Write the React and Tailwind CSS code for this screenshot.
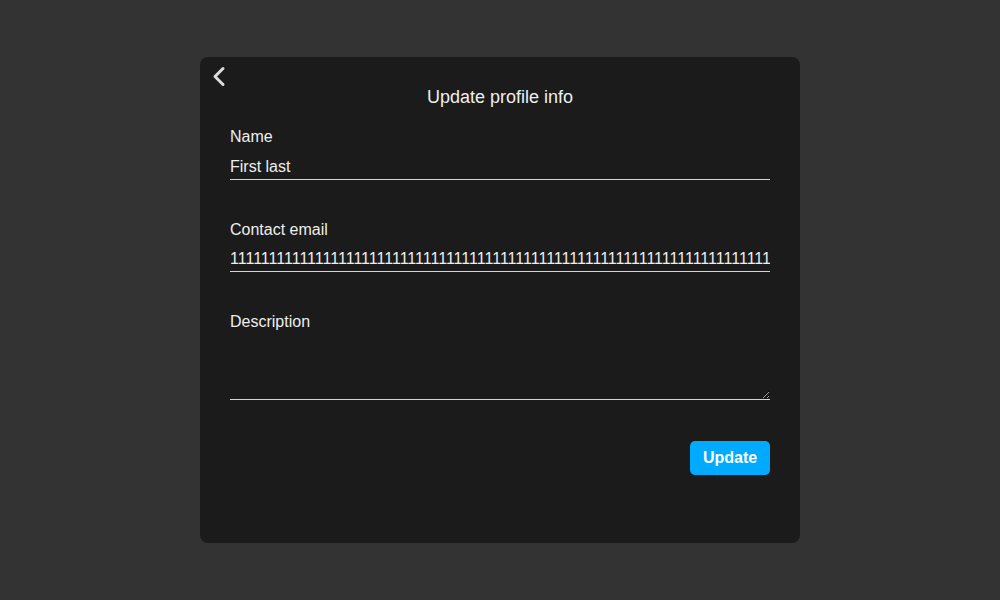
import React from 'react';

export default function App() {
  const email = '1'.repeat(90);

  return (
    <div className="w-full h-[600px] bg-[#333333] flex items-center justify-center font-['Liberation_Sans',Arial,sans-serif]">
      <div className="relative w-[600px] h-[486px] bg-[#1b1b1b] rounded-lg px-[30px] pt-[27px]">
        <button className="absolute left-[9px] top-[7px] p-0 text-[#dddddd]" aria-label="Back">
          <svg width="20" height="25" viewBox="0 0 20 25" fill="none">
            <path d="M14 4.5 L6 12.5 L14 20.5" stroke="currentColor" strokeWidth="3" strokeLinecap="round" strokeLinejoin="round" />
          </svg>
        </button>

        <h1 className="text-center text-[18px] leading-[27px] text-[#eeeeee]">Update profile info</h1>

        <form className="mt-[14px] flex flex-col" onSubmit={(e) => e.preventDefault()}>
          <label className="text-[16px] leading-6 text-[#eeeeee]">Name</label>
          <input
            defaultValue="First last"
            className="mt-[6px] w-full bg-transparent text-[16px] leading-6 h-[25px] text-[#eeeeee] border-b border-[#d6d6d6] outline-none p-0"
          />

          <label className="mt-[38px] text-[16px] leading-6 text-[#eeeeee]">Contact email</label>
          <input
            defaultValue={email}
            className="mt-[5px] w-full bg-transparent text-[16px] leading-6 h-[25px] text-[#eeeeee] border-b border-[#d6d6d6] outline-none p-0"
          />

          <label className="mt-[38px] text-[16px] leading-6 text-[#eeeeee]">Description</label>
          <textarea
            className="mt-[6px] w-full h-[60px] bg-transparent text-[16px] leading-6 text-[#eeeeee] border-b border-[#d6d6d6] outline-none p-0"
          />

          <div className="mt-[41px] flex justify-end">
            <button type="submit" className="w-[80px] h-[34px] rounded-[5px] bg-[#00aaff] text-white font-bold text-[16px]">
              Update
            </button>
          </div>
        </form>
      </div>
    </div>
  );
}
